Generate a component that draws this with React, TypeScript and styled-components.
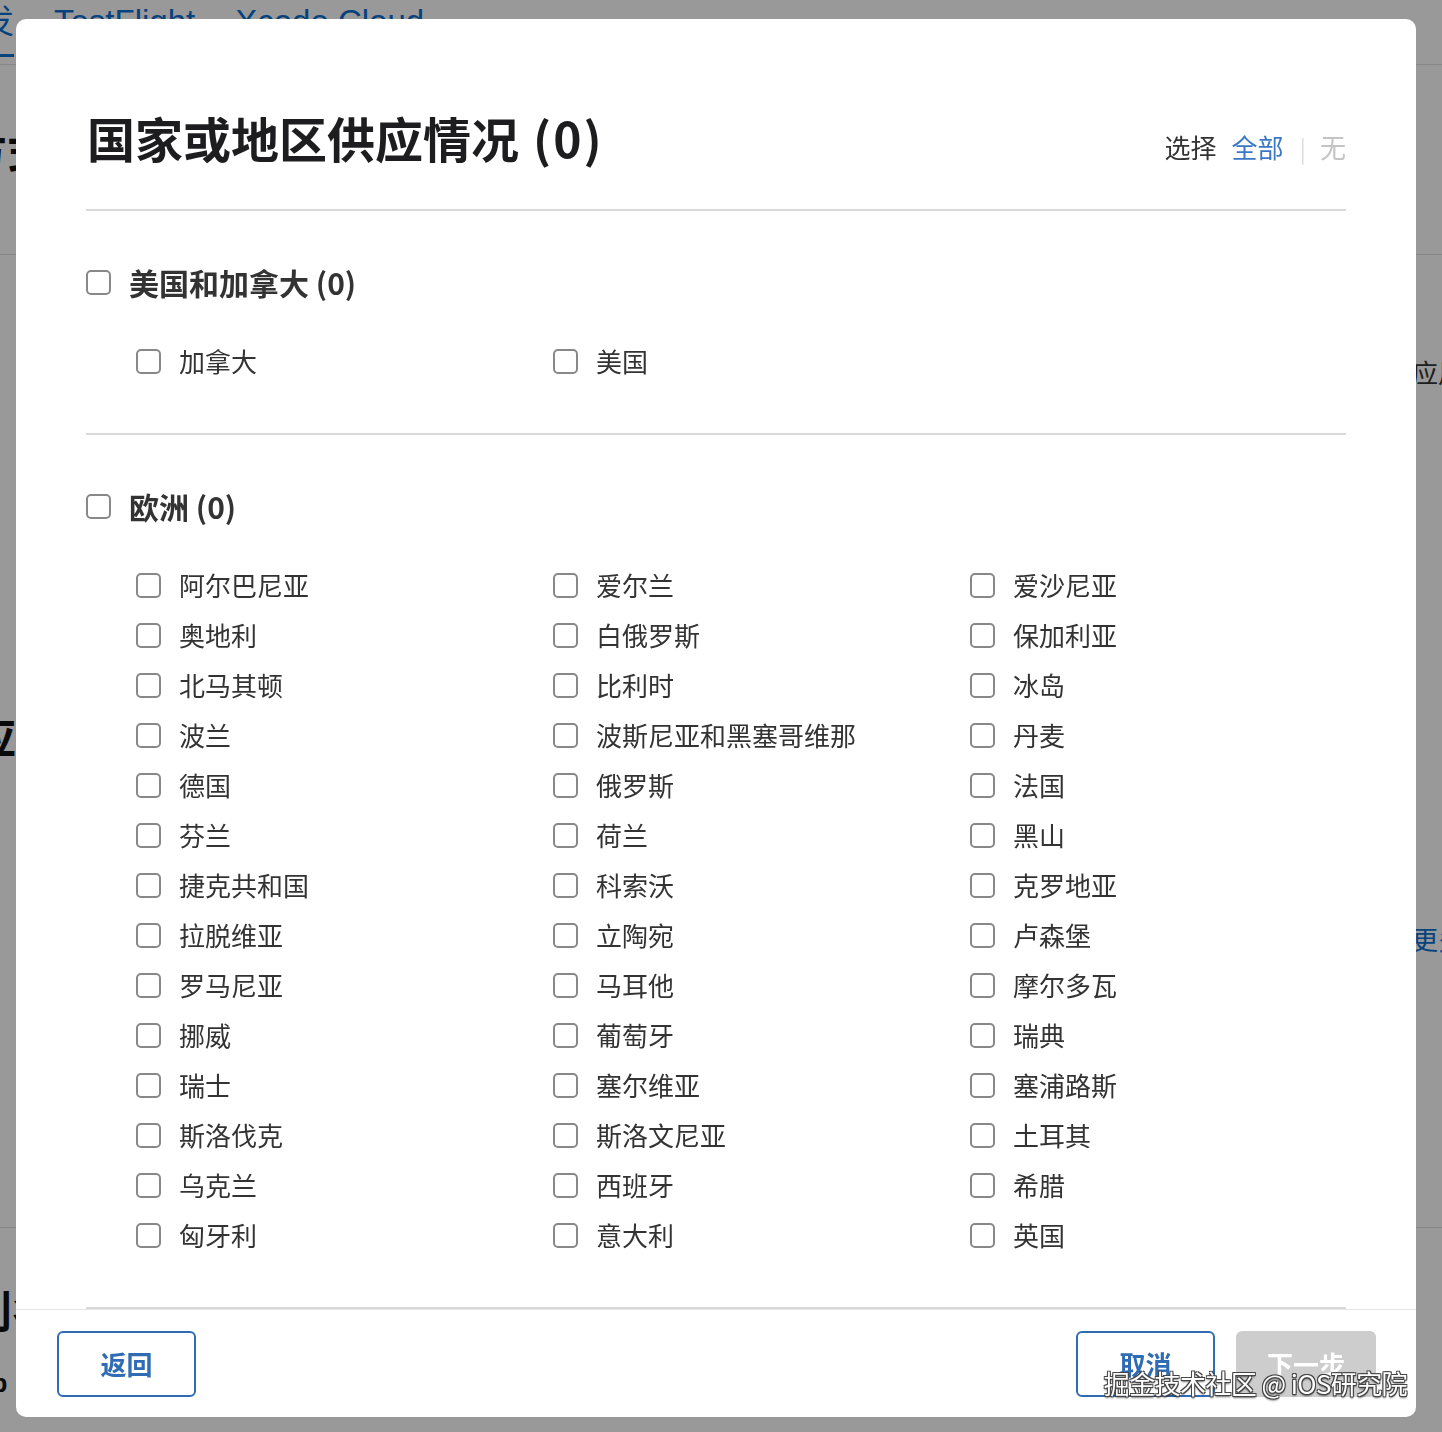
import styled, { createGlobalStyle } from "styled-components";

const GlobalStyle = createGlobalStyle`
  html, body {
    margin: 0;
    padding: 0;
    width: 1442px;
    height: 1432px;
    overflow: hidden;
    background: #ffffff;
  }
  * {
    box-sizing: border-box;
  }
  body {
    font-family: "Noto Sans CJK SC", "Liberation Sans", sans-serif;
    color: #333;
  }
`;

/* ---------- page behind the dialog ---------- */

const Page = styled.div`
  width: 1540px;
  margin-left: -52px;
  height: 1432px;
  overflow: hidden;
`;

const TabBar = styled.nav`
  display: flex;
  align-items: flex-start;
  gap: 40px;
  height: 65px;
  border-bottom: 1px solid #e2e2e2;
`;

const Tab = styled.a<{ $active?: boolean }>`
  font-family: "Liberation Sans", "Noto Sans CJK SC", sans-serif;
  font-size: 33px;
  line-height: 60px;
  color: #0a6ed1;
  padding-bottom: 2px;
  border-bottom: 3px solid ${(p) => (p.$active ? "#0a6ed1" : "transparent")};
  margin-top: -8px;
`;

const PageSection = styled.section<{ $height: number }>`
  display: flex;
  justify-content: space-between;
  height: ${(p) => p.$height}px;
  border-bottom: 1px solid #e2e2e2;
`;

const SideHeading = styled.h2<{ $top: number; $left: number }>`
  margin: ${(p) => p.$top}px 0 0 ${(p) => p.$left}px;
  font-size: 44px;
  font-weight: 700;
  line-height: 50px;
  color: #111;
  white-space: nowrap;
`;

const SideColumn = styled.div`
  display: flex;
  flex-direction: column;
  width: 76px;
`;

const SideText = styled.span<{ $top: number; $link?: boolean }>`
  margin-top: ${(p) => p.$top}px;
  font-size: 26px;
  line-height: 32px;
  color: ${(p) => (p.$link ? "#0a6ed1" : "#333")};
  white-space: nowrap;
`;

const SmallText = styled.div`
  margin: 34px 0 0 5px;
  font-family: "Liberation Sans", sans-serif;
  font-size: 26px;
  font-weight: 700;
  color: #111;
`;

/* ---------- dialog ---------- */

const Overlay = styled.div`
  position: fixed;
  inset: 0;
  background: rgba(0, 0, 0, 0.4);
  display: flex;
  align-items: flex-start;
  padding: 19px 26px 15px 16px;
`;

const Modal = styled.div`
  position: relative;
  width: 1400px;
  height: 1398px;
  background: #fff;
  border-radius: 10px;
  display: flex;
  flex-direction: column;
  overflow: hidden;
`;

const Body = styled.div`
  flex: 1;
  min-height: 0;
  overflow: hidden;
  padding: 0 70px;
`;

const Header = styled.header`
  display: flex;
  align-items: baseline;
  justify-content: space-between;
  padding: 90px 0 44px 0;
  border-bottom: 2px solid #d9d9d9;
`;

const Title = styled.h1`
  margin: 0;
  font-size: 48px;
  line-height: 56px;
  font-weight: 700;
  color: #1d1d1f;
  padding-left: 1px;
`;

const Count = styled.span`
  margin-left: 14px;
  letter-spacing: 2px;
`;

const SelectBar = styled.div`
  display: flex;
  align-items: baseline;
  font-size: 26px;
  line-height: 32px;
  color: #333;
`;

const SelectLink = styled.a<{ $disabled?: boolean }>`
  color: ${(p) => (p.$disabled ? "#c4c4c4" : "#3a78c6")};
  cursor: pointer;
`;

const Label = styled.span`
  margin-right: 15px;
`;

const Divider = styled.span`
  color: #dedede;
  margin: 0 14px 0 16px;
  font-size: 24px;
`;

const Group = styled.section`
  padding: 56px 0 47px 0;
  border-bottom: 2px solid #d9d9d9;
`;

const GroupHeading = styled.label`
  display: flex;
  align-items: center;
  gap: 18px;
  font-size: 30px;
  line-height: 30px;
  font-weight: 700;
  color: #333;
`;

const Options = styled.div`
  display: grid;
  grid-template-columns: repeat(3, 417px);
  grid-auto-rows: 50px;
  margin: 39px 0 0 50px;
`;

const Option = styled.label`
  display: flex;
  align-items: center;
  gap: 18px;
  font-size: 26px;
  line-height: 50px;
  color: #333;
  white-space: nowrap;
`;

const Box = styled.input.attrs({ type: "checkbox" })`
  appearance: none;
  flex: none;
  width: 25px;
  height: 25px;
  margin: 0;
  border: 2px solid #888;
  border-radius: 5px;
  background: #fff;
`;

const Footer = styled.footer`
  flex: none;
  height: 108px;
  border-top: 1px solid #e6e6e6;
  display: flex;
  align-items: center;
  justify-content: space-between;
  padding: 0 40px 0 41px;
`;

const ButtonRow = styled.div`
  display: flex;
  gap: 21px;
`;

const Button = styled.button<{ $primary?: boolean }>`
  width: ${(p) => (p.$primary ? 140 : 139)}px;
  height: 66px;
  border-radius: 6px;
  font-family: "Noto Sans CJK SC", sans-serif;
  font-size: 26px;
  font-weight: 700;
  border: 2px solid ${(p) => (p.$primary ? "#cdcdcd" : "#2f6cb3")};
  background: ${(p) => (p.$primary ? "#cdcdcd" : "#fff")};
  color: ${(p) => (p.$primary ? "#fff" : "#2f6cb3")};
  padding: 0;
`;

const Watermark = styled.div`
  position: absolute;
  right: 9px;
  bottom: 18px;
  font-size: 26px;
  line-height: 32px;
  color: #fff;
  letter-spacing: -0.6px;
  text-shadow: -1px -1px 0 #444, 1px -1px 0 #444, -1px 1px 0 #444, 1px 1px 0 #444,
    0 2px 2px rgba(0, 0, 0, 0.6);
`;

interface Region {
  name: string;
  countries: string[];
}

const regions: Region[] = [
  { name: "美国和加拿大", countries: ["加拿大", "美国"] },
  {
    name: "欧洲",
    countries: [
      "阿尔巴尼亚", "爱尔兰", "爱沙尼亚",
      "奥地利", "白俄罗斯", "保加利亚",
      "北马其顿", "比利时", "冰岛",
      "波兰", "波斯尼亚和黑塞哥维那", "丹麦",
      "德国", "俄罗斯", "法国",
      "芬兰", "荷兰", "黑山",
      "捷克共和国", "科索沃", "克罗地亚",
      "拉脱维亚", "立陶宛", "卢森堡",
      "罗马尼亚", "马耳他", "摩尔多瓦",
      "挪威", "葡萄牙", "瑞典",
      "瑞士", "塞尔维亚", "塞浦路斯",
      "斯洛伐克", "斯洛文尼亚", "土耳其",
      "乌克兰", "西班牙", "希腊",
      "匈牙利", "意大利", "英国",
    ],
  },
  {
    name: "亚太地区",
    countries: ["澳大利亚", "不丹", "菲律宾", "韩国", "日本", "新加坡"],
  },
];

function App() {
  return (
    <>
      <GlobalStyle />
      <Page>
        <TabBar>
          <Tab $active>开发</Tab>
          <Tab>TestFlight</Tab>
          <Tab>Xcode Cloud</Tab>
        </TabBar>
        <PageSection $height={190}>
          <SideHeading $top={60} $left={15}>
            方式
          </SideHeading>
        </PageSection>
        <PageSection $height={973}>
          <SideHeading $top={455} $left={24}>
            应用
          </SideHeading>
          <SideColumn>
            <SideText $top={101}>应用</SideText>
            <SideText $top={535} $link>
              更多
            </SideText>
          </SideColumn>
        </PageSection>
        <PageSection $height={300}>
          <div>
            <SideHeading $top={56} $left={20}>
              别名
            </SideHeading>
            <SmallText>Web</SmallText>
          </div>
        </PageSection>
      </Page>

      <Overlay>
        <Modal>
          <Body>
            <Header>
              <Title>
                国家或地区供应情况<Count>(0)</Count>
              </Title>
              <SelectBar>
                <Label>选择</Label>
                <SelectLink>全部</SelectLink>
                <Divider>|</Divider>
                <SelectLink $disabled>无</SelectLink>
              </SelectBar>
            </Header>

            {regions.map((region) => (
              <Group key={region.name}>
                <GroupHeading>
                  <Box />
                  {region.name} (0)
                </GroupHeading>
                <Options>
                  {region.countries.map((country) => (
                    <Option key={country}>
                      <Box />
                      {country}
                    </Option>
                  ))}
                </Options>
              </Group>
            ))}
          </Body>

          <Footer>
            <Button>返回</Button>
            <ButtonRow>
              <Button>取消</Button>
              <Button $primary>下一步</Button>
            </ButtonRow>
          </Footer>

          <Watermark>掘金技术社区 @ iOS研究院</Watermark>
        </Modal>
      </Overlay>
    </>
  );
}

export default App;
